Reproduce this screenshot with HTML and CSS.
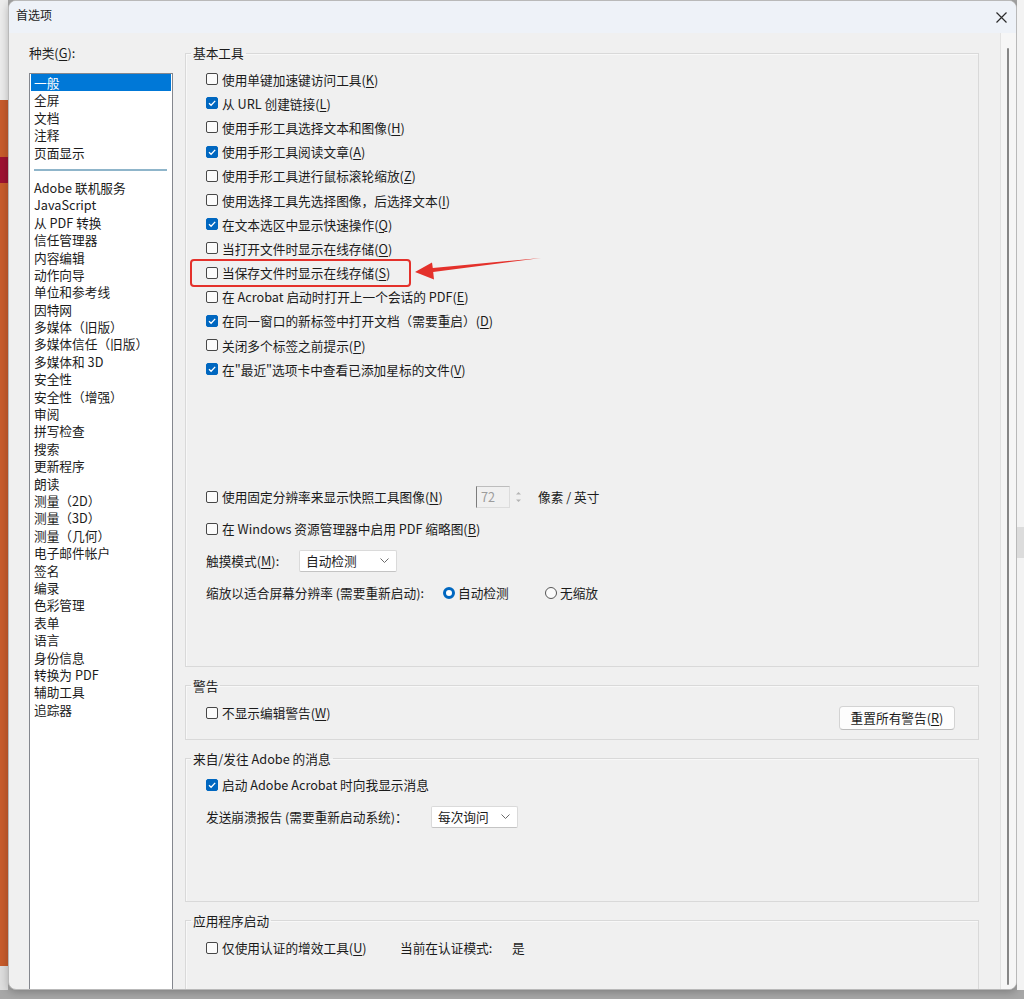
FILE: index.html
```html
<!DOCTYPE html>
<html lang="zh-CN">
<head>
    <meta charset="UTF-8">
    <meta name="viewport" content="width=device-width, initial-scale=1.0">
    <title>首选项</title>
    <link rel="stylesheet" href="styles.css">
</head>
<body>
<div class="desk">
    <div class="desk-left"></div>
    <div class="dialog">
        <div class="titlebar">
            <span class="title">首选项</span>
            <span class="close">
                <svg width="11" height="11" viewBox="0 0 11 11"><path d="M0.5 0.5L10.5 10.5M10.5 0.5L0.5 10.5" stroke="#2b2b2b" stroke-width="1.2" fill="none"/></svg>
            </span>
        </div>
        <div class="dlg-body">
            <div class="categories">
                <div class="cat-label">种类(<u>G</u>):</div>
                <ul class="cat-list">
                    <li class="sel">一般</li>
                    <li>全屏</li>
                    <li>文档</li>
                    <li>注释</li>
                    <li>页面显示</li>
                    <li class="sep"></li>
                    <li>Adobe 联机服务</li>
                    <li>JavaScript</li>
                    <li>从 PDF 转换</li>
                    <li>信任管理器</li>
                    <li>内容编辑</li>
                    <li>动作向导</li>
                    <li>单位和参考线</li>
                    <li>因特网</li>
                    <li>多媒体（旧版）</li>
                    <li>多媒体信任（旧版）</li>
                    <li>多媒体和 3D</li>
                    <li>安全性</li>
                    <li>安全性（增强）</li>
                    <li>审阅</li>
                    <li>拼写检查</li>
                    <li>搜索</li>
                    <li>更新程序</li>
                    <li>朗读</li>
                    <li>测量（2D）</li>
                    <li>测量（3D）</li>
                    <li>测量（几何）</li>
                    <li>电子邮件帐户</li>
                    <li>签名</li>
                    <li>编录</li>
                    <li>色彩管理</li>
                    <li>表单</li>
                    <li>语言</li>
                    <li>身份信息</li>
                    <li>转换为 PDF</li>
                    <li>辅助工具</li>
                    <li>追踪器</li>
                </ul>
            </div>
            <div class="pane">
                <div class="pane-content">
                    <fieldset class="group group-tools">
                        <legend>基本工具</legend>
                        <div class="rows">
                            <label class="row"><span class="cb"></span>使用单键加速键访问工具(<u>K</u>)</label>
                            <label class="row"><span class="cb on"></span>从 URL 创建链接(<u>L</u>)</label>
                            <label class="row"><span class="cb"></span>使用手形工具选择文本和图像(<u>H</u>)</label>
                            <label class="row"><span class="cb on"></span>使用手形工具阅读文章(<u>A</u>)</label>
                            <label class="row"><span class="cb"></span>使用手形工具进行鼠标滚轮缩放(<u>Z</u>)</label>
                            <label class="row"><span class="cb"></span>使用选择工具先选择图像，后选择文本(<u>I</u>)</label>
                            <label class="row"><span class="cb on"></span>在文本选区中显示快速操作(<u>Q</u>)</label>
                            <label class="row"><span class="cb"></span>当打开文件时显示在线存储(<u>O</u>)</label>
                            <label class="row"><span class="cb"></span>当保存文件时显示在线存储(<u>S</u>)</label>
                            <label class="row"><span class="cb"></span>在 Acrobat 启动时打开上一个会话的 PDF(<u>E</u>)</label>
                            <label class="row"><span class="cb on"></span>在同一窗口的新标签中打开文档（需要重启）(<u>D</u>)</label>
                            <label class="row"><span class="cb"></span>关闭多个标签之前提示(<u>P</u>)</label>
                            <label class="row"><span class="cb on"></span>在"最近"选项卡中查看已添加星标的文件(<u>V</u>)</label>
                        </div>
                        <div class="rows rows-wide">
                            <div class="row">
                                <label class="opt w-snap"><span class="cb"></span>使用固定分辨率来显示快照工具图像(<u>N</u>)</label>
                                <span class="num">72</span>
                                <span class="spin">
                                    <svg width="11" height="22" viewBox="0 0 11 22"><path d="M3 8.5L5.5 6L8 8.5Z M3 13.5L5.5 16L8 13.5Z" fill="#b4b4b4"/></svg>
                                </span>
                                <span class="unit">像素 / 英寸</span>
                            </div>
                            <label class="row"><span class="cb"></span>在 Windows 资源管理器中启用 PDF 缩略图(<u>B</u>)</label>
                            <div class="row">
                                <span class="w-touch">触摸模式(<u>M</u>):</span>
                                <span class="dd dd-touch">自动检测
                                    <svg width="9" height="5" viewBox="0 0 9 5"><path d="M0.5 0.5L4.5 4.5L8.5 0.5" stroke="#6a6a6a" fill="none"/></svg>
                                </span>
                            </div>
                            <div class="row">
                                <span class="w-scale">缩放以适合屏幕分辨率 (需要重新启动):</span>
                                <label class="opt w-radio"><span class="rb on"></span>自动检测</label>
                                <label class="opt"><span class="rb"></span>无缩放</label>
                            </div>
                        </div>
                    </fieldset>

                    <fieldset class="group group-warn">
                        <legend>警告</legend>
                        <div class="warn-row">
                            <label class="opt"><span class="cb"></span>不显示编辑警告(<u>W</u>)</label>
                            <button class="btn">重置所有警告(<u>R</u>)</button>
                        </div>
                    </fieldset>

                    <fieldset class="group group-msg">
                        <legend>来自/发往 Adobe 的消息</legend>
                        <label class="row"><span class="cb on"></span>启动 Adobe Acrobat 时向我显示消息</label>
                        <div class="row">
                            <span class="w-crash">发送崩溃报告 (需要重新启动系统)：</span>
                            <span class="dd dd-crash">每次询问
                                <svg width="9" height="5" viewBox="0 0 9 5"><path d="M0.5 0.5L4.5 4.5L8.5 0.5" stroke="#6a6a6a" fill="none"/></svg>
                            </span>
                        </div>
                    </fieldset>

                    <fieldset class="group group-start">
                        <legend>应用程序启动</legend>
                        <div class="row">
                            <label class="opt w-cert"><span class="cb"></span>仅使用认证的增效工具(<u>U</u>)</label>
                            <span class="w-mode">当前在认证模式:</span>
                            <span>是</span>
                        </div>
                    </fieldset>
                </div>
                <div class="scrollbar"><div class="thumb"></div></div>
            </div>
        </div>
    </div>
    <div class="desk-right"></div>
</div>

<svg class="annot" width="1024" height="999" viewBox="0 0 1024 999">
    <rect x="191" y="260" width="219" height="26" rx="3" fill="none" stroke="#e4312b" stroke-width="2"/>
    <polygon points="415,272 432,262.5 432.8,268 541,258 433.2,272 434,279.5" fill="#e4312b"/>
</svg>
</body>
</html>
```

FILE: styles.css
```css
* {
    box-sizing: border-box;
}
body {
    margin: 0;
    width: 1024px;
    height: 999px;
    overflow: hidden;
    position: relative;
    background: #a7a7a7;
    font-family: "Noto Sans CJK SC", "Noto Sans", sans-serif;
    font-size: 12.7px;
    color: #1b1b1b;
}
u {
    text-decoration-thickness: 1px;
    text-underline-offset: 2px;
}
.desk {
    display: flex;
    height: 990px;
}
.desk-left {
    width: 8px;
    background: linear-gradient(#ececec 0 100px, #c85c2c 100px 157px, #9e1232 157px 183px, #c85c2c 183px 966px, #dedede 966px);
}
.desk-right {
    flex: 1;
    background: linear-gradient(#f3f3f3 0 527px, #dcdcdc 527px 558px, #f3f3f3 558px);
}
.dialog {
    width: 1009px;
    height: 990px;
    border: 1px solid #b9b9b9;
    border-radius: 8px;
    background: #f0f0f0;
    display: flex;
    flex-direction: column;
    overflow: hidden;
    box-shadow: 0 2px 8px rgba(0, 0, 0, 0.25);
}

/* title bar */
.titlebar {
    height: 32px;
    flex: none;
    display: flex;
    justify-content: space-between;
    align-items: flex-start;
    background: #eef2f8;
    padding: 5px 0 0 7px;
}
.title {
    font-size: 12px;
    line-height: 18px;
}
.close {
    width: 30px;
    height: 22px;
    display: flex;
    align-items: center;
    justify-content: center;
}

.dlg-body {
    flex: 1;
    display: flex;
    min-height: 0;
}

/* category list */
.categories {
    width: 171px;
    flex: none;
    display: flex;
    flex-direction: column;
    padding: 11px 7px 0 20px;
}
.cat-label {
    line-height: 18px;
    margin-bottom: 11px;
}
.cat-list {
    flex: 1;
    margin: 0;
    padding: 0 1px 1px;
    list-style: none;
    background: #fff;
    border: 1px solid #84878e;
    border-bottom: none;
}
.cat-list li {
    line-height: 17.4px;
    height: 17.4px;
    padding-left: 3px;
    white-space: nowrap;
}
.cat-list li.sel {
    background: #0078d7;
    color: #fff;
}
.cat-list li.sep {
    height: 18px;
    padding: 0 4px 0 3px;
    display: flex;
    align-items: center;
}
.cat-list li.sep::before {
    content: "";
    flex: 1;
    height: 2px;
    background: #8fb5ca;
}

/* right pane */
.pane {
    flex: 1;
    display: flex;
    min-width: 0;
}
.pane-content {
    flex: 1;
    padding: 11px 21px 0 5px;
    overflow: hidden;
}
.scrollbar {
    width: 16px;
    flex: none;
    border-left: 1px solid #e2e2e2;
    background: #f6f6f6;
    padding: 15px 0 4px 6px;
}
.thumb {
    width: 2px;
    height: 100%;
    background: #878787;
    border-radius: 1px;
}

.group {
    margin: 0 0 10px;
    border: 1px solid #d9d9d9;
    padding: 0 20px;
    min-width: 0;
    box-shadow: inset 1px 1px 0 #f8f8f8;
}
.group legend {
    padding: 0 2px;
    margin-left: -15px;
    line-height: 18px;
}
.group-tools {
    padding-top: 5px;
    padding-bottom: 57px;
}
.group-tools .rows .row {
    height: 24.2px;
}
.group-tools .rows-wide {
    margin-top: 99.4px;
}
.group-tools .rows-wide .row {
    height: 32px;
}
.group-warn {
    padding-top: 9px;
    padding-bottom: 9px;
}
.group-msg {
    padding-top: 1px;
    padding-bottom: 68px;
}
.group-start {
    padding-top: 2px;
    height: 120px;
}

.row {
    display: flex;
    align-items: center;
    height: 32px;
    white-space: nowrap;
}
.opt {
    display: flex;
    align-items: center;
    white-space: nowrap;
}

/* checkbox and radio */
.cb {
    width: 12px;
    height: 12px;
    flex: none;
    margin-right: 4px;
    border: 1px solid #474747;
    border-radius: 2px;
    background: #fbfbfb;
}
.cb.on {
    border-color: #0067c0;
    background: #0067c0 url("data:image/svg+xml,%3Csvg xmlns='http://www.w3.org/2000/svg' width='10' height='10' viewBox='0 0 10 10'%3E%3Cpath d='M2 5.2L4.1 7.3L8.2 2.9' stroke='white' stroke-width='1.3' fill='none'/%3E%3C/svg%3E") center / 10px 10px no-repeat;
}
.rb {
    width: 12px;
    height: 12px;
    flex: none;
    margin-right: 3px;
    border: 1px solid #555;
    border-radius: 50%;
    background: #fbfbfb;
}
.rb.on {
    border: 3.5px solid #0067c0;
    background: #fff;
}

.w-snap {
    width: 270px;
}
.w-touch {
    width: 93px;
}
.w-scale {
    width: 237px;
}
.w-radio {
    width: 102px;
}
.w-crash {
    width: 225px;
}
.w-cert {
    width: 194px;
}
.w-mode {
    width: 112px;
}

.num {
    width: 34px;
    height: 22px;
    line-height: 20px;
    padding-left: 4px;
    color: #9c9c9c;
    border: 1px solid #dcdcdc;
    border-left-color: #7c7c7c;
    border-top-color: #bdbdbd;
    background: #f0f0f0;
}
.spin {
    display: flex;
    margin-left: 3px;
}
.unit {
    margin-left: 14px;
}

.dd {
    height: 22px;
    display: flex;
    align-items: center;
    justify-content: space-between;
    padding: 0 7px 0 6px;
    background: #fff;
    border: 1px solid #dadada;
    border-bottom-color: #c4c4c4;
    border-radius: 2px;
}
.dd-touch {
    width: 98px;
}
.dd-crash {
    width: 87px;
}

.warn-row {
    display: flex;
    justify-content: space-between;
    align-items: flex-start;
}
.warn-row .opt {
    line-height: 18px;
}
.btn {
    width: 116px;
    height: 24px;
    margin: 2px 3px 0 0;
    padding: 0;
    font: inherit;
    color: inherit;
    background: #fdfdfd;
    border: 1px solid #d3d3d3;
    border-bottom-color: #bcbcbc;
    border-radius: 4px;
}

.annot {
    position: absolute;
    left: 0;
    top: 0;
    pointer-events: none;
}
```
